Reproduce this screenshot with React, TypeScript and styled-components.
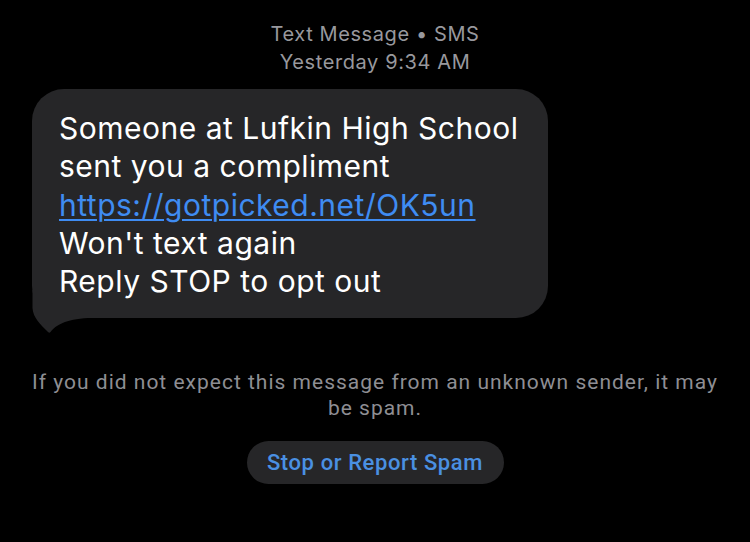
import React from "react";
import styled, { createGlobalStyle } from "styled-components";

const GlobalStyle = createGlobalStyle`
	html, body {
		margin: 0;
		padding: 0;
		background: #000;
	}
	body {
		width: 750px;
		height: 542px;
		overflow: hidden;
		font-family: Inter, "Liberation Sans", sans-serif;
	}
`;

const Screen = styled.div`
	display: flex;
	flex-direction: column;
	align-items: stretch;
	height: 542px;
	background: #000;
	padding-top: 20px;
	box-sizing: border-box;
`;

const Header = styled.div`
	display: flex;
	flex-direction: column;
	align-items: center;
	color: #98989d;
	font-size: 20px;
	line-height: 28px;
	letter-spacing: 0.6px;
`;

const Row = styled.div`
	display: flex;
	padding-left: 32px;
	margin-top: 13px;
`;

const Bubble = styled.div`
	position: relative;
	background: #262628;
	border-radius: 32px;
	padding: 20px 30px 18px 27px;
	color: #fff;
	font-size: 30px;
	line-height: 38.3px;
	letter-spacing: 0.5px;
`;

const BubbleText = styled.div`
	position: relative;
	z-index: 1;
`;

const Tail = styled.svg`
	position: absolute;
	left: 0;
	bottom: -16px;
`;

const Link = styled.a`
	color: #3f8cf2;
	text-decoration: underline;
	text-decoration-thickness: 2px;
	text-underline-offset: 3px;
`;

const Notice = styled.div`
	margin-top: 51px;
	padding: 0 28px;
	text-align: center;
	color: #8e8e93;
	font-family: Roboto, "Liberation Sans", sans-serif;
	font-size: 21px;
	line-height: 26px;
	letter-spacing: 1px;
`;

const Actions = styled.div`
	display: flex;
	justify-content: center;
	margin-top: 20px;
`;

const SpamButton = styled.button`
	border: none;
	background: #262628;
	color: #4a90e2;
	font-family: Roboto, "Liberation Sans", sans-serif;
	font-weight: 500;
	font-size: 22px;
	letter-spacing: 0.6px;
	height: 43px;
	width: 257px;
	border-radius: 22px;
	padding: 0;
`;

export default function App() {
	return (
		<>
			<GlobalStyle />
			<Screen>
				<Header>
					<span>Text Message • SMS</span>
					<span>Yesterday 9:34 AM</span>
				</Header>
				<Row>
					<Bubble>
						<Tail width="56" height="44" viewBox="0 0 56 44">
							<path
								d="M0.5 0 L0.5 18 C1 28 9 35 15.5 41.5 Q17 43.5 18.5 42 C24 35 33 29.5 56 28 L56 0 Z"
								fill="#262628"
							/>
						</Tail>
						<BubbleText>
							<div>Someone at Lufkin High School</div>
							<div>sent you a compliment</div>
							<div>
								<Link>https://gotpicked.net/OK5un</Link>
							</div>
							<div>Won't text again</div>
							<div>Reply STOP to opt out</div>
						</BubbleText>
					</Bubble>
				</Row>
				<Notice>
					If you did not expect this message from an unknown sender, it may be spam.
				</Notice>
				<Actions>
					<SpamButton>Stop or Report Spam</SpamButton>
				</Actions>
			</Screen>
		</>
	);
}
